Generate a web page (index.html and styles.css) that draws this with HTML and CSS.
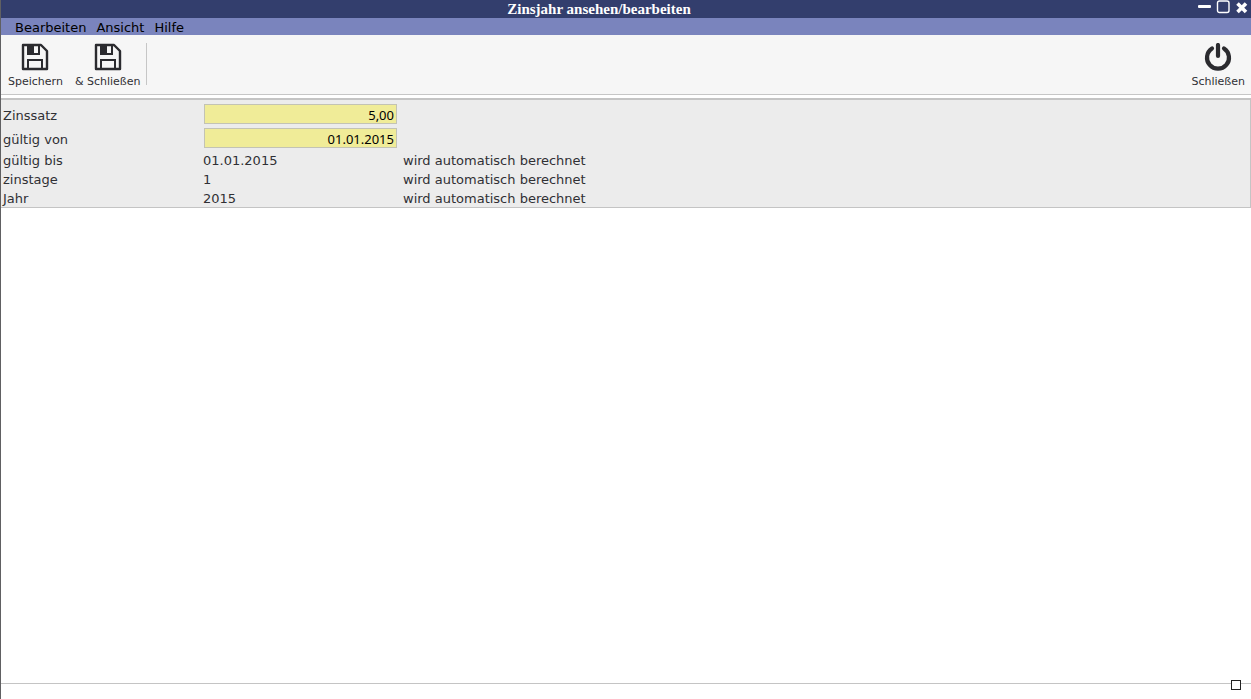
FILE: index.html
```html
<!DOCTYPE html>
<html lang="de">
<head>
<meta charset="utf-8">
<title>Zinsjahr ansehen/bearbeiten</title>
<link rel="stylesheet" href="styles.css">
</head>
<body>
<div class="window">
  <header class="titlebar">
    <h1 class="title">Zinsjahr ansehen/bearbeiten</h1>
    <div class="controls">
      <button type="button" class="control" aria-label="Minimieren"><svg width="14" height="14" viewBox="0 0 14 14"><rect x="1" y="5" width="13" height="3" rx="1" fill="#fff"/></svg></button>
      <button type="button" class="control" aria-label="Maximieren"><svg width="14" height="14" viewBox="0 0 14 14"><rect x="1.500" y="1" width="11.500" height="11.500" rx="2" fill="none" stroke="#fff" stroke-width="1.400"/></svg></button>
      <button type="button" class="control" aria-label="Fenster schließen"><svg width="14" height="14" viewBox="0 0 14 14"><path d="M2.500 3.500l8.500 8.500M11 3.500l-8.500 8.500" stroke="#fff" stroke-width="3.600"/></svg></button>
    </div>
  </header>
  <nav class="menu">
    <button type="button" class="menu-item">Bearbeiten</button>
    <button type="button" class="menu-item">Ansicht</button>
    <button type="button" class="menu-item">Hilfe</button>
  </nav>
  <div class="toolbar">
    <div class="tools">
      <button type="button" class="tool">
        <svg class="icon" width="28" height="28" viewBox="0 0 28 28"><path d="M2 2h18l6 6v18H2z" fill="none" stroke="#2b2b2f" stroke-width="2.400" stroke-linejoin="round"/><path d="M7 2v9h11V2M7 26v-9h14v9" fill="none" stroke="#2b2b2f" stroke-width="2"/><path d="M7 2h6v9H7z" fill="#2b2b2f"/></svg>
        <span>Speichern</span>
      </button>
      <button type="button" class="tool">
        <svg class="icon" width="28" height="28" viewBox="0 0 28 28"><path d="M2 2h18l6 6v18H2z" fill="none" stroke="#2b2b2f" stroke-width="2.400" stroke-linejoin="round"/><path d="M7 2v9h11V2M7 26v-9h14v9" fill="none" stroke="#2b2b2f" stroke-width="2"/><path d="M7 2h6v9H7z" fill="#2b2b2f"/></svg>
        <span>&amp; Schließen</span>
      </button>
    </div>
    <button type="button" class="tool">
      <svg class="icon" width="28" height="28" viewBox="0 0 28 28"><path d="M8 5.500a11 11 0 1 0 12 0" fill="none" stroke="#2b2b2f" stroke-width="4.200" stroke-linecap="round"/><path d="M14 2v11" stroke="#2b2b2f" stroke-width="4.200" stroke-linecap="round"/></svg>
      <span>Schließen</span>
    </button>
  </div>
  <form class="panel">
    <div class="row row-edit"><label for="satz">Zinssatz</label><input id="satz" class="field" type="text" value="5,00"></div>
    <div class="row row-edit"><label for="von">gültig von</label><input id="von" class="field" type="text" value="01.01.2015"></div>
    <div class="row"><span>gültig bis</span><span>01.01.2015</span><span>wird automatisch berechnet</span></div>
    <div class="row"><span>zinstage</span><span>1</span><span>wird automatisch berechnet</span></div>
    <div class="row"><span>Jahr</span><span>2015</span><span>wird automatisch berechnet</span></div>
  </form>
  <footer class="status"><span class="grip"></span></footer>
</div>
</body>
</html>
```
FILE: styles.css
```css
* {
  box-sizing: border-box;
}

body {
  margin: 0;
  background: #fff;
  color: #303034;
  font: 13px/19px Verdana, "DejaVu Sans", sans-serif;
}

button {
  margin: 0;
  padding: 0;
  border: 0;
  background: none;
  color: inherit;
  font: inherit;
}

svg {
  display: block;
}

.window {
  display: flex;
  flex-direction: column;
  min-height: 100vh;
  border-left: 1px solid #606062;
}

.titlebar {
  display: flex;
  height: 18px;
  background: #333e6d;
  color: #fff;
}

.title {
  flex: 1;
  margin: 0;
  font: bold 15px/18px "Liberation Serif", serif;
  text-align: center;
}

.controls {
  display: flex;
  gap: 5px;
  padding-right: 2px;
}

.control {
  display: flex;
  width: 14px;
  height: 14px;
}

.menu {
  display: flex;
  gap: 10px;
  height: 17px;
  padding-left: 14px;
  background: #7a84bd;
  color: #000;
}

.menu-item {
  height: 19px;
}

.toolbar {
  display: flex;
  justify-content: space-between;
  height: 60px;
  padding: 8px 6px 9px 7px;
  border-bottom: 1px solid #c6c6c6;
  background: #f6f6f6;
}

.tools {
  display: flex;
  gap: 12px;
  padding-right: 5px;
  border-right: 1px solid #c6c6c6;
}

.tool {
  display: flex;
  flex-direction: column;
  align-items: center;
  gap: 5px;
  font-size: 11px;
  line-height: 12px;
}

.icon {
  flex: none;
}

.panel {
  margin-top: 3px;
  padding: 2px;
  padding-bottom: 0;
  border: 1px solid #c4c4c4;
  border-top-width: 2px;
  border-left: 0;
  background: #ececec;
}

.row {
  display: grid;
  grid-template-columns: 200px 200px 1fr;
  align-items: center;
  height: 19px;
}

.row > label,
.row > span {
  padding-top: 1px;
}

.row-edit {
  height: 24px;
}

.row-edit > label {
  padding-top: 2px;
}

.field {
  width: 193px;
  height: 20px;
  margin-left: 1px;
  padding: 2px 2px 0;
  border: 1px solid #c3c3b4;
  border-radius: 0;
  background: #f0ec98;
  color: #000;
  font: 13px "Noto Sans", sans-serif;
  text-align: right;
}

.status {
  position: relative;
  height: 16px;
  margin-top: auto;
  border-top: 1px solid #c4c4c4;
}

.grip {
  position: absolute;
  top: -4px;
  right: 10px;
  width: 10px;
  height: 10px;
  border: 1px solid #222;
  background: #fff;
}
```
